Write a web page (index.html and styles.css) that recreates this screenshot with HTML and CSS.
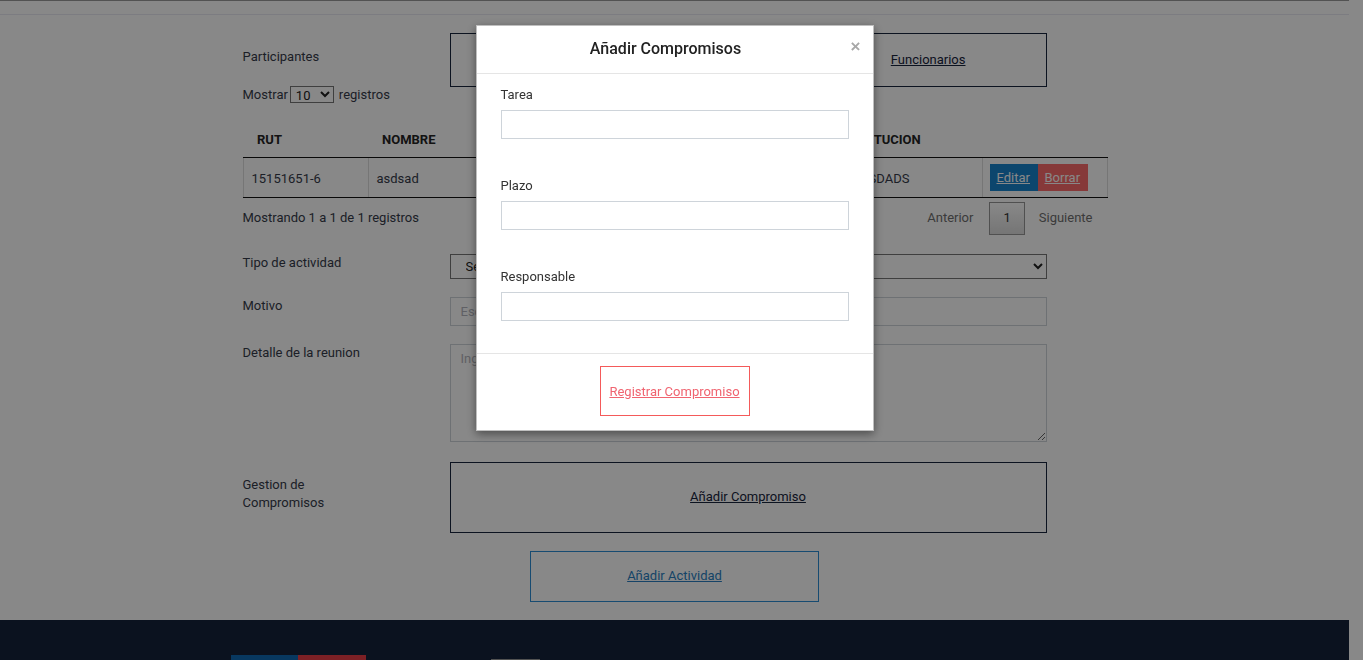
FILE: index.html
```html
<!DOCTYPE html>
<html lang="es">
<head>
<meta charset="utf-8">
<title>Añadir Actividad</title>
<link rel="stylesheet" href="styles.css">
</head>
<body class="modal-open">
<div class="page">
  <div class="topbar"></div>
  <main class="container">
    <div class="form-row row-participantes">
      <label class="form-label lbl-participantes">Participantes</label>
      <div class="field box-field box-participantes">
        <a href="#" class="box-link">Externos</a>
        <a href="#" class="box-link">Funcionarios</a>
      </div>
    </div>

    <div class="dt-length">
      <span>Mostrar</span>
      <select class="len-select"><option>10</option><option>25</option></select>
      <span>registros</span>
    </div>

    <table class="dt">
      <colgroup>
        <col class="c-rut"><col class="c-nombre"><col class="c-cargo"><col class="c-inst"><col class="c-acc">
      </colgroup>
      <thead>
        <tr><th>RUT</th><th>NOMBRE</th><th>CARGO</th><th>INSTITUCION</th><th></th></tr>
      </thead>
      <tbody>
        <tr>
          <td>15151651-6</td>
          <td>asdsad</td>
          <td>asdsad</td>
          <td>ASDASDADS</td>
          <td class="acc-cell"><a href="#" class="btn-editar">Editar</a><a href="#" class="btn-borrar">Borrar</a></td>
        </tr>
      </tbody>
    </table>

    <div class="dt-bottom">
      <div class="dt-info">Mostrando 1 a 1 de 1 registros</div>
      <div class="dt-paginate">
        <a class="pbtn disabled">Anterior</a><a class="pbtn current">1</a><a class="pbtn disabled next">Siguiente</a>
      </div>
    </div>

    <div class="form-row row-tipo">
      <label class="form-label">Tipo de actividad</label>
      <div class="field">
        <select class="native-select"><option>Seleccione tipo de actividad</option></select>
      </div>
    </div>

    <div class="form-row row-motivo">
      <label class="form-label">Motivo</label>
      <div class="field">
        <input type="text" class="text-input" placeholder="Escriba el motivo de la reunion">
      </div>
    </div>

    <div class="form-row row-detalle">
      <label class="form-label">Detalle de la reunion</label>
      <div class="field">
        <textarea class="text-area" placeholder="Ingrese el detalle de la reunion"></textarea>
      </div>
    </div>

    <div class="form-row row-gestion">
      <label class="form-label lbl-gestion">Gestion de Compromisos</label>
      <div class="field box-field box-gestion">
        <a href="#" class="box-link">Añadir Compromiso</a>
      </div>
    </div>

    <div class="actions">
      <a href="#" class="btn-actividad">Añadir Actividad</a>
    </div>
  </main>

  <footer class="footer">
    <div class="footer-inner">
      <div class="gov-bar"><span class="gov-blue"></span><span class="gov-red"></span></div>
      <div class="footer-logo"></div>
    </div>
  </footer>
</div>

<div class="overlay"></div>

<div class="modal-wrap">
  <div class="modal-dialog">
    <div class="modal-header">
      <h4 class="modal-title">Añadir Compromisos</h4>
      <button type="button" class="close">×</button>
    </div>
    <div class="modal-body">
      <div class="m-group">
        <label class="m-label">Tarea</label>
        <input type="text" class="m-input">
      </div>
      <div class="m-group">
        <label class="m-label">Plazo</label>
        <input type="text" class="m-input">
      </div>
      <div class="m-group last">
        <label class="m-label">Responsable</label>
        <input type="text" class="m-input">
      </div>
    </div>
    <div class="modal-footer">
      <a href="#" class="btn-registrar">Registrar Compromiso</a>
    </div>
  </div>
</div>
</body>
</html>
```

FILE: styles.css
```css
* { box-sizing: border-box; }

html, body {
  margin: 0;
  padding: 0;
  height: 100%;
}

body {
  font-family: Roboto, "Liberation Sans", Arial, sans-serif;
  font-size: 13px;
  color: #333a48;
  background: #ffffff;
  overflow: hidden;
}

body.modal-open {
  padding-right: 14px;
}

.page {
  width: 1349px;
}

.topbar {
  height: 15px;
  border-top: 1px solid #9a9a9a;
  border-bottom: 1px solid #e9e9f2;
  background: #ffffff;
}

.container {
  width: 864px;
  margin: 0 auto;
}

/* form rows */
.form-row {
  display: flex;
  align-items: flex-start;
}

.form-label {
  width: 207px;
  flex: none;
  line-height: 16px;
  padding-top: 1px;
  color: #363b4a;
}

.field {
  width: 597px;
  flex: none;
}

.row-participantes { margin-top: 18px; }
.lbl-participantes { padding-top: 16px; }

.box-field {
  border: 1px solid #18243c;
  display: flex;
  align-items: center;
}

.box-participantes {
  height: 54px;
  justify-content: space-between;
  padding: 0 80px 0 80px;
}

.box-link {
  color: #18243c;
  text-decoration: underline;
  line-height: 16px;
}

.dt-length {
  display: flex;
  align-items: center;
  height: 14px;
  color: #363b4a;
}

.len-select {
  width: 44px;
  height: 17px;
  margin: 0 5px 0 2px;
  padding: 0 0 0 1px;
  font-family: Roboto, "Liberation Sans", Arial, sans-serif;
  font-size: 13px;
  color: #222;
  border: 1px solid #767676;
  border-radius: 0;
  background: #fff;
}

/* table */
.dt {
  margin-top: 20px;
  width: 864px;
  table-layout: fixed;
  border-collapse: collapse;
}

.c-rut { width: 125px; }
.c-nombre { width: 226px; }
.c-cargo { width: 233px; }
.c-inst { width: 155px; }
.c-acc { width: 125px; }

.dt th {
  text-align: left;
  font-weight: 700;
  color: #252525;
  padding: 11px 14px 9px;
  line-height: 16px;
  border-bottom: 1px solid #111111;
}

.dt td {
  padding: 7px 8px 5px;
  line-height: 27px;
  color: #363b4a;
  border-left: 1px solid #dddddd;
  border-right: 1px solid #dddddd;
  border-bottom: 1px solid #111111;
  white-space: nowrap;
  overflow: hidden;
}

.dt td.acc-cell {
  padding: 6px 7px;
}

.btn-editar,
.btn-borrar {
  display: inline-block;
  height: 27px;
  line-height: 28px;
  padding: 0 7px;
  color: #ffffff;
  text-decoration: underline;
  vertical-align: top;
}

.btn-editar { background: #1783cd; width: 48px; }
.btn-borrar { background: #fc6c6c; width: 50px; }

.dt-bottom {
  display: flex;
  justify-content: space-between;
  align-items: flex-start;
  margin-top: 4px;
}

.dt-info {
  padding-top: 8px;
  line-height: 16px;
  color: #363b4a;
}

.dt-paginate {
  display: flex;
}

.pbtn {
  display: inline-block;
  padding: 6px 13px 7px;
  line-height: 18px;
  border: 1px solid transparent;
  margin-left: 2px;
  color: #6f6f6f;
}

.pbtn.next {
  padding-left: 11px;
}

.pbtn.current {
  color: #333;
  border: 1px solid #979797;
  background: linear-gradient(to bottom, #ffffff 0%, #dcdcdc 100%);
}

.row-tipo { margin-top: 19px; }

.native-select {
  display: block;
  width: 597px;
  height: 25px;
  padding: 0 0 0 11px;
  font-family: Roboto, "Liberation Sans", Arial, sans-serif;
  font-size: 13px;
  color: #222;
  border: 1px solid #767676;
  border-radius: 0;
  background: #fff;
}

.row-motivo { margin-top: 18px; }

.text-input {
  display: block;
  width: 597px;
  height: 29px;
  padding: 0 10px;
  border: 1px solid #ced4da;
  border-radius: 0;
  font-family: Roboto, "Liberation Sans", Arial, sans-serif;
  font-size: 13px;
  color: #333;
  background: #fff;
}

.row-detalle { margin-top: 18px; }

.text-area {
  display: block;
  width: 597px;
  height: 98px;
  padding: 6px 10px 5px;
  border: 1px solid #ced4da;
  border-radius: 0;
  font-family: Roboto, "Liberation Sans", Arial, sans-serif;
  font-size: 13px;
  line-height: 16px;
  color: #333;
  background: #fff;
  resize: vertical;
}

.text-input::placeholder,
.text-area::placeholder {
  color: #b4b5bd;
}

.row-gestion { margin-top: 20px; }

.lbl-gestion {
  padding-top: 14px;
  line-height: 18px;
  padding-right: 82px;
}

.box-gestion {
  height: 71px;
  justify-content: center;
  padding-bottom: 2px;
}

.actions {
  display: flex;
  justify-content: center;
  margin-top: 18px;
}

.btn-actividad {
  display: flex;
  align-items: center;
  justify-content: center;
  width: 289px;
  height: 51px;
  padding-bottom: 2px;
  border: 1px solid #2b8ed4;
  color: #2a7fc2;
  text-decoration: underline;
}

/* footer */
.footer {
  margin-top: 18px;
  height: 220px;
  background: #16223a;
}

.footer-inner {
  width: 887px;
  margin: 0 auto;
  padding-top: 35px;
  display: flex;
  align-items: flex-start;
}

.gov-bar {
  display: flex;
  width: 135px;
  height: 5px;
  flex: none;
}

.gov-blue { width: 67px; background: #0f69b4; }
.gov-red { width: 68px; background: #eb3c46; }

.footer-logo {
  margin-left: 125px;
  margin-top: 4px;
  width: 49px;
  height: 40px;
  background: #9a9a9a;
}

/* modal */
.overlay {
  position: fixed;
  top: 0;
  left: 0;
  right: 0;
  bottom: 0;
  background: rgba(0, 0, 0, 0.467);
}

.modal-wrap {
  position: fixed;
  top: 0;
  left: 0;
  right: 14px;
  bottom: 0;
}

.modal-dialog {
  width: 398px;
  margin: 25px auto 0;
  background: #ffffff;
  border: 1px solid rgba(0, 0, 0, 0.25);
  box-shadow: 0 3px 9px rgba(0, 0, 0, 0.45);
}

.modal-header {
  display: flex;
  align-items: flex-start;
  padding: 14px 15px 16px;
  border-bottom: 1px solid #e5e5e5;
}

.modal-title {
  flex: 1;
  margin: 0;
  text-align: center;
  font-size: 16px;
  font-weight: 500;
  line-height: 17px;
  color: #222;
}

.close {
  width: 21px;
  padding: 0;
  margin: -2px -3px 0 0;
  border: 0;
  background: none;
  text-align: right;
  font-family: "Liberation Sans", Arial, sans-serif;
  font-size: 17px;
  font-weight: 700;
  line-height: 17px;
  color: #a8a8a8;
  cursor: pointer;
}

.modal-body {
  padding: 12px 25px 32px 24px;
}

.m-group {
  margin-bottom: 38px;
}

.m-group.last {
  margin-bottom: 0;
}

.m-label {
  display: block;
  line-height: 16px;
  padding-top: 1px;
  margin-bottom: 7px;
  color: #333;
}

.m-input {
  display: block;
  width: 348px;
  height: 29px;
  padding: 0 10px;
  border: 1px solid #ced4da;
  border-radius: 0;
  font-family: Roboto, "Liberation Sans", Arial, sans-serif;
  font-size: 13px;
  background: #fff;
}

.modal-footer {
  display: flex;
  justify-content: center;
  padding: 12px 0 14px;
  border-top: 1px solid #e5e5e5;
}

.btn-registrar {
  display: flex;
  align-items: center;
  justify-content: center;
  width: 150px;
  height: 50px;
  border: 1px solid #f45a5a;
  color: #f06470;
  text-decoration: underline;
}
```
